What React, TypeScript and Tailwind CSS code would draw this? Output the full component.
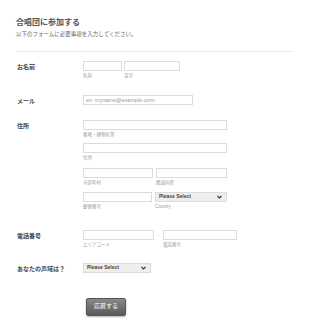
const FONT = "font-['Liberation_Sans','Noto_Sans_CJK_JP',sans-serif]";

function Sub({ children }: { children: React.ReactNode }) {
  return <div className="mt-[2px] text-[4.5px] leading-[6px] text-[#999]">{children}</div>;
}

function Field({ className = '', label, placeholder }: { className?: string; label?: string; placeholder?: string }) {
  return (
    <div className={className}>
      <div className="h-[10px] border border-[#dcdcdc] bg-white px-[2px] text-[5.5px] leading-[8px] text-[#999]">
        {placeholder}
      </div>
      {label && <Sub>{label}</Sub>}
    </div>
  );
}

function Select({ className = '' }: { className?: string }) {
  return (
    <div className={`flex h-[10px] items-center justify-between border border-[#dcdcdc] bg-[#eeeeee] pl-[3px] pr-[4px] text-[5px] font-bold text-[#444] ${className}`}>
      <span>Please Select</span>
      <svg width="5" height="4" viewBox="0 0 10 8">
        <path d="M1 2 L5 6 L9 2" fill="none" stroke="#333" strokeWidth="2.2" />
      </svg>
    </div>
  );
}

function Label({ children }: { children: React.ReactNode }) {
  return <div className="w-[67px] shrink-0 pl-[1px] pt-[3px] text-[6px] font-bold leading-[6px] text-[#444]">{children}</div>;
}

export default function App() {
  return (
    <div className={`h-[325px] w-[310px] bg-white ${FONT}`}>
      <div className="px-[16px] pt-[18px]">
        <h1 className="text-[8px] font-bold leading-[10px] text-[#555]">合唱団に参加する</h1>
        <p className="mt-[3px] text-[5.5px] leading-[7px] text-[#666]">以下のフォームに必要事項を入力してください。</p>
        <div className="mt-[13px] w-[277px] border-t border-[#eeeeee]" />

        <div className="mt-[9px] flex">
          <Label>お名前</Label>
          <div className="flex gap-[2px]">
            <Field className="w-[39px]" label="名前" />
            <Field className="w-[56px]" label="苗字" />
          </div>
        </div>

        <div className="mt-[16px] flex">
          <Label>メール</Label>
          <Field className="w-[110px]" placeholder="ex: myname@example.com" />
        </div>

        <div className="mt-[15px] flex">
          <Label>住所</Label>
          <div className="w-[144px]">
            <Field label="番地・建物名等" />
            <Field className="mt-[5px]" label="住所" />
            <div className="mt-[7px] flex gap-[3px]">
              <Field className="w-[70px]" label="市区町村" />
              <Field className="w-[71px]" label="都道府県" />
            </div>
            <div className="mt-[6px] flex gap-[3px]">
              <Field className="w-[70px]" label="郵便番号" />
              <div className="w-[73px]">
                <Select />
                <Sub>Country</Sub>
              </div>
            </div>
          </div>
        </div>

        <div className="mt-[20px] flex">
          <Label>電話番号</Label>
          <div className="flex">
            <Field className="w-[71px]" label="エリアコード" />
            <span className="w-[9px] pt-[2px] text-center text-[5px] text-[#999]">-</span>
            <Field className="w-[74px]" label="電話番号" />
          </div>
        </div>

        <div className="mt-[15px] flex">
          <Label>あなたの声域は？</Label>
          <Select className="w-[68px]" />
        </div>

        <div className="mt-[18px] pl-[70px]">
          <button className="h-[18px] w-[40px] rounded-[2px] border border-[#555] bg-gradient-to-b from-[#8a8a8a] to-[#5a5a5a] text-[6px] text-white shadow-[0_1px_2px_rgba(0,0,0,0.3)]">
            応募する
          </button>
        </div>
      </div>
    </div>
  );
}
